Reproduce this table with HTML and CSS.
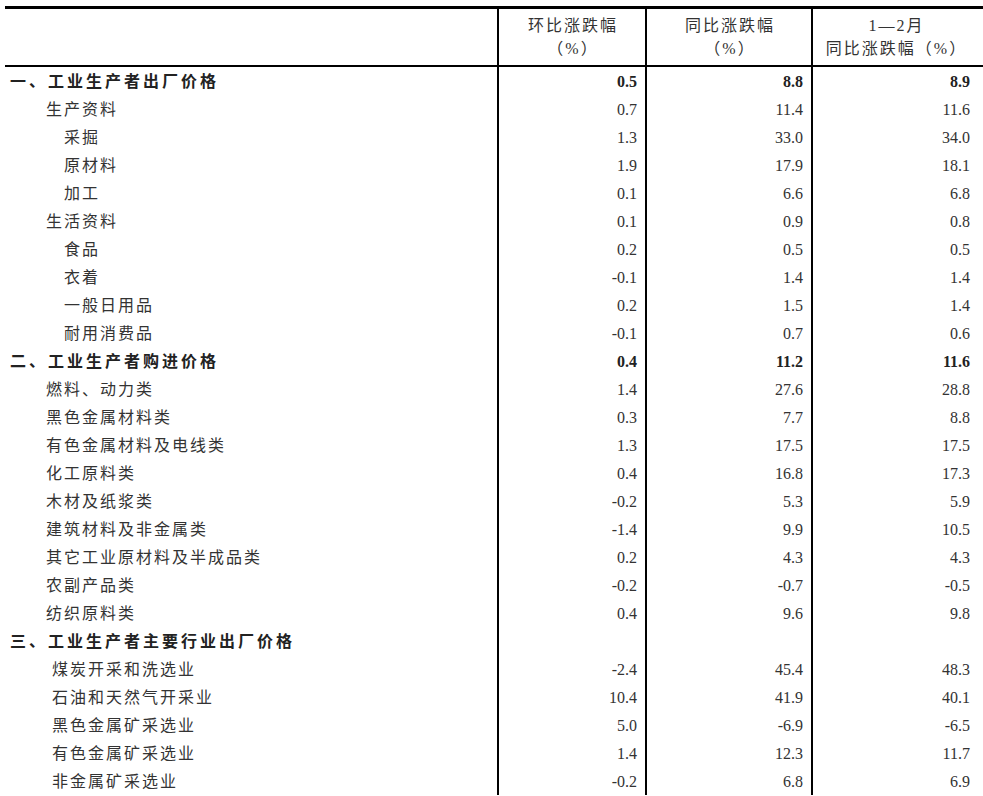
FILE: index.html
```html
<!DOCTYPE html>
<html lang="zh-CN">
<head>
<meta charset="utf-8">
<title>工业生产者价格</title>
<link rel="stylesheet" href="styles.css">
</head>
<body>
<div class="table">
  <div class="row head">
    <div class="cell name"></div>
    <div class="cell hcell">环比涨跌幅<br>（%）</div>
    <div class="cell hcell">同比涨跌幅<br>（%）</div>
    <div class="cell hcell">1—2月<br>同比涨跌幅（%）</div>
  </div>

  <div class="row bold"><div class="cell name l1">一、工业生产者出厂价格</div><div class="cell num">0.5</div><div class="cell num">8.8</div><div class="cell num">8.9</div></div>
  <div class="row"><div class="cell name l2">生产资料</div><div class="cell num">0.7</div><div class="cell num">11.4</div><div class="cell num">11.6</div></div>
  <div class="row"><div class="cell name l3">采掘</div><div class="cell num">1.3</div><div class="cell num">33.0</div><div class="cell num">34.0</div></div>
  <div class="row"><div class="cell name l3">原材料</div><div class="cell num">1.9</div><div class="cell num">17.9</div><div class="cell num">18.1</div></div>
  <div class="row"><div class="cell name l3">加工</div><div class="cell num">0.1</div><div class="cell num">6.6</div><div class="cell num">6.8</div></div>
  <div class="row"><div class="cell name l2">生活资料</div><div class="cell num">0.1</div><div class="cell num">0.9</div><div class="cell num">0.8</div></div>
  <div class="row"><div class="cell name l3">食品</div><div class="cell num">0.2</div><div class="cell num">0.5</div><div class="cell num">0.5</div></div>
  <div class="row"><div class="cell name l3">衣着</div><div class="cell num">-0.1</div><div class="cell num">1.4</div><div class="cell num">1.4</div></div>
  <div class="row"><div class="cell name l3">一般日用品</div><div class="cell num">0.2</div><div class="cell num">1.5</div><div class="cell num">1.4</div></div>
  <div class="row"><div class="cell name l3">耐用消费品</div><div class="cell num">-0.1</div><div class="cell num">0.7</div><div class="cell num">0.6</div></div>

  <div class="row bold"><div class="cell name l1">二、工业生产者购进价格</div><div class="cell num">0.4</div><div class="cell num">11.2</div><div class="cell num">11.6</div></div>
  <div class="row"><div class="cell name l2">燃料、动力类</div><div class="cell num">1.4</div><div class="cell num">27.6</div><div class="cell num">28.8</div></div>
  <div class="row"><div class="cell name l2">黑色金属材料类</div><div class="cell num">0.3</div><div class="cell num">7.7</div><div class="cell num">8.8</div></div>
  <div class="row"><div class="cell name l2">有色金属材料及电线类</div><div class="cell num">1.3</div><div class="cell num">17.5</div><div class="cell num">17.5</div></div>
  <div class="row"><div class="cell name l2">化工原料类</div><div class="cell num">0.4</div><div class="cell num">16.8</div><div class="cell num">17.3</div></div>
  <div class="row"><div class="cell name l2">木材及纸浆类</div><div class="cell num">-0.2</div><div class="cell num">5.3</div><div class="cell num">5.9</div></div>
  <div class="row"><div class="cell name l2">建筑材料及非金属类</div><div class="cell num">-1.4</div><div class="cell num">9.9</div><div class="cell num">10.5</div></div>
  <div class="row"><div class="cell name l2">其它工业原材料及半成品类</div><div class="cell num">0.2</div><div class="cell num">4.3</div><div class="cell num">4.3</div></div>
  <div class="row"><div class="cell name l2">农副产品类</div><div class="cell num">-0.2</div><div class="cell num">-0.7</div><div class="cell num">-0.5</div></div>
  <div class="row"><div class="cell name l2">纺织原料类</div><div class="cell num">0.4</div><div class="cell num">9.6</div><div class="cell num">9.8</div></div>

  <div class="row bold"><div class="cell name l1">三、工业生产者主要行业出厂价格</div><div class="cell num"></div><div class="cell num"></div><div class="cell num"></div></div>
  <div class="row"><div class="cell name l4">煤炭开采和洗选业</div><div class="cell num">-2.4</div><div class="cell num">45.4</div><div class="cell num">48.3</div></div>
  <div class="row"><div class="cell name l4">石油和天然气开采业</div><div class="cell num">10.4</div><div class="cell num">41.9</div><div class="cell num">40.1</div></div>
  <div class="row"><div class="cell name l4">黑色金属矿采选业</div><div class="cell num">5.0</div><div class="cell num">-6.9</div><div class="cell num">-6.5</div></div>
  <div class="row"><div class="cell name l4">有色金属矿采选业</div><div class="cell num">1.4</div><div class="cell num">12.3</div><div class="cell num">11.7</div></div>
  <div class="row"><div class="cell name l4">非金属矿采选业</div><div class="cell num">-0.2</div><div class="cell num">6.8</div><div class="cell num">6.9</div></div>
</div>
</body>
</html>
```

FILE: styles.css
```css
html, body {
  margin: 0;
  padding: 0;
  background: #fff;
  overflow: hidden;
}

body {
  padding-top: 6px;
  font-family: "Liberation Serif", "Noto Sans CJK SC", serif;
  font-size: 16px;
  color: #333;
}

.table {
  margin-left: 5px;
  width: 1000px;
  border-top: 3px solid #000;
}

.row {
  display: grid;
  grid-template-columns: 492px 148px 166px 167px;
  height: 28px;
}

.head {
  height: 56px;
  border-bottom: 2px solid #000;
}

.cell {
  box-sizing: border-box;
  line-height: 28px;
  padding-top: 1px;
  white-space: nowrap;
}

.cell + .cell {
  border-left: 2px solid #000;
}

.hcell {
  text-align: center;
  line-height: 23px;
  padding-top: 5px;
  letter-spacing: 2px;
  padding-left: 2px;
}

.name {
  letter-spacing: 2px;
}

.l1 { padding-left: 5px; }
.l2 { padding-left: 41px; }
.l3 { padding-left: 59px; }
.l4 { padding-left: 47px; }

.num {
  text-align: right;
  padding-right: 8px;
}

.bold .cell {
  font-weight: bold;
  color: #222;
}

.bold .name {
  letter-spacing: 3px;
}
```
